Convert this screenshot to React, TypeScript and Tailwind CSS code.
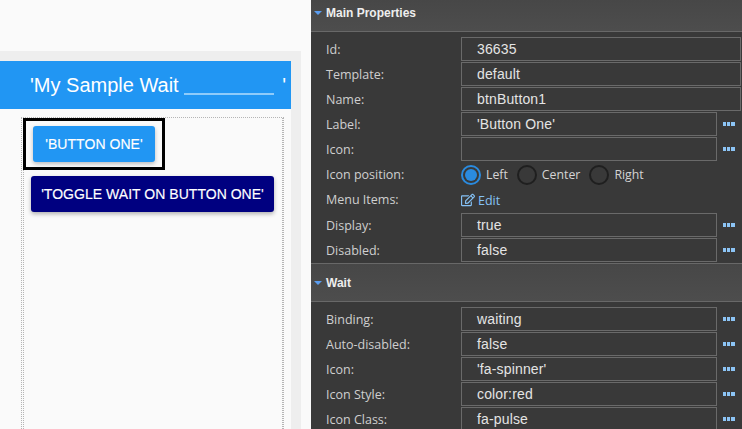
import React from "react";
import { FaRegEdit } from "react-icons/fa";

const sans = "font-['Liberation_Sans',Arial,sans-serif]";
const open = "font-['Open_Sans',sans-serif]";

function Dots() {
  return (
    <div className="ml-[6px] mt-[10px] flex w-[13px] gap-px">
      <span className="h-[4px] w-[3px] bg-[#8cc4f5]" />
      <span className="h-[4px] w-[3px] bg-[#8cc4f5]" />
      <span className="h-[4px] w-[4px] bg-[#8cc4f5]" />
    </div>
  );
}

function Row({ label, value, full }: { label: string; value: string; full?: boolean }) {
  return (
    <div className="flex h-[25px] items-start">
      <div className={`flex h-[24px] w-[150px] items-center pl-[15px] pt-[2px] text-[12.5px] text-[#cfcfcf] ${open}`}>
        {label}
      </div>
      <div
        className={`flex h-[24px] items-center border border-[#6a6a6a] pl-[15px] text-[14px] tracking-[0.15px] text-[#e4e4e4] ${sans} ${
          full ? "w-[280px]" : "w-[256px]"
        }`}
      >
        {value}
      </div>
      {!full && <Dots />}
    </div>
  );
}

function Section({ title, className, arrow }: { title: string; className: string; arrow: string }) {
  return (
    <div
      className={`flex items-start border-b border-[#686868] bg-gradient-to-b from-[#474747] to-[#4d4d4d] pl-[3px] ${className}`}
    >
      <svg width="8" height="4" viewBox="0 0 8 4" className={`mr-[4px] ${arrow}`}>
        <path d="M0 0h8L4 4z" fill="#5b9df0" />
      </svg>
      <span className={`text-[12px] font-bold leading-[14px] text-[#eeeeee] ${sans}`}>{title}</span>
    </div>
  );
}

function Radio({ label, on }: { label: string; on?: boolean }) {
  return (
    <div className="flex items-center gap-[5px]">
      <span
        className={`flex h-[20px] w-[20px] items-center justify-center rounded-full border-2 ${
          on ? "border-[#2a8be0]" : "border-[#1f1f1f]"
        }`}
      >
        {on && <span className="h-[12px] w-[12px] rounded-full bg-[#2a8be0]" />}
      </span>
      <span className={`pt-[2px] text-[12.3px] text-[#d4d4d4] ${open}`}>{label}</span>
    </div>
  );
}

export default function App() {
  return (
    <div className="flex h-[429px] w-[742px] overflow-hidden bg-[#fafafa]">
      <div className="flex h-full w-[311px] shrink-0 flex-col pr-[10px] pt-[51px]">
        <div className="flex flex-1 flex-col bg-[#eeeeee] pr-[10px] pt-[10px]">
          <div className={`flex h-[48px] items-center bg-[#2196f3] pl-[30px] text-[20px] text-white ${sans}`}>
            <span className="whitespace-pre">'My Sample Wait </span>
            <span className="mt-[18px] h-[2px] w-[90px] bg-[#8ecbfa]" />
            <span className="ml-[8px]">'</span>
          </div>
          <div className="flex flex-1 flex-col bg-[#fafafa] pl-[21px] pr-[7px] pt-[8px]">
            <div className="flex-1 border-x border-t border-dotted border-[#b5b5b5] pl-px">
              <div className="h-full border-l border-r border-dotted border-[#b5b5b5] pl-[9px] pr-[8px] pt-[8px]">
                <div className="relative w-[122px]">
                  <div className="absolute left-[-10px] top-[-8px] h-[52px] w-[142px] border-[3px] border-black" />
                  <div
                    className={`flex h-[36px] items-center justify-center rounded-[3px] bg-[#2196f3] text-[14px] tracking-[0.05px] text-white shadow-[0_2px_4px_rgba(0,0,0,0.25)] [-webkit-text-stroke:0.15px_white] ${sans}`}
                  >
                    'BUTTON ONE'
                  </div>
                </div>
                <div
                  className={`ml-[-2px] mt-[14px] flex h-[36px] w-[243px] items-center justify-center rounded-[3px] bg-[#000080] text-[14px] tracking-[0.03px] text-white shadow-[0_2px_4px_rgba(0,0,0,0.3)] [-webkit-text-stroke:0.15px_white] ${sans}`}
                >
                  'TOGGLE WAIT ON BUTTON ONE'
                </div>
              </div>
            </div>
          </div>
        </div>
      </div>

      <div className="h-full w-[431px] shrink-0 overflow-hidden bg-[#393939]">
        <Section title="Main Properties" className="h-[32px] pt-[6px]" arrow="mt-[5px]" />
        <div className="pt-[5px]">
          <Row label="Id:" value="36635" full />
          <Row label="Template:" value="default" full />
          <Row label="Name:" value="btnButton1" full />
          <Row label="Label:" value="'Button One'" />
          <Row label="Icon:" value="" />
          <div className="flex h-[25px] items-center">
            <div className={`w-[150px] pl-[15px] pt-[2px] text-[12.5px] text-[#cfcfcf] ${open}`}>Icon position:</div>
            <div className="flex items-center gap-[9px]">
              <Radio label="Left" on />
              <Radio label="Center" />
              <Radio label="Right" />
            </div>
          </div>
          <div className="flex h-[26px] items-center">
            <div className={`w-[150px] pl-[15px] text-[12.5px] text-[#cfcfcf] ${open}`}>Menu Items:</div>
            <div className={`flex items-center gap-[3px] text-[12.5px] text-[#85c1f5] ${open}`}>
              <FaRegEdit size={14} color="#85c1f5" />
              <span className="pt-[2px]">Edit</span>
            </div>
          </div>
          <Row label="Display:" value="true" />
          <Row label="Disabled:" value="false" />
        </div>
        <Section title="Wait" className="h-[39px] border-t pt-[12px]" arrow="mt-[5px]" />
        <div className="pt-[5px]">
          <Row label="Binding:" value="waiting" />
          <Row label="Auto-disabled:" value="false" />
          <Row label="Icon:" value="'fa-spinner'" />
          <Row label="Icon Style:" value="color:red" />
          <Row label="Icon Class:" value="fa-pulse" />
        </div>
      </div>
    </div>
  );
}
